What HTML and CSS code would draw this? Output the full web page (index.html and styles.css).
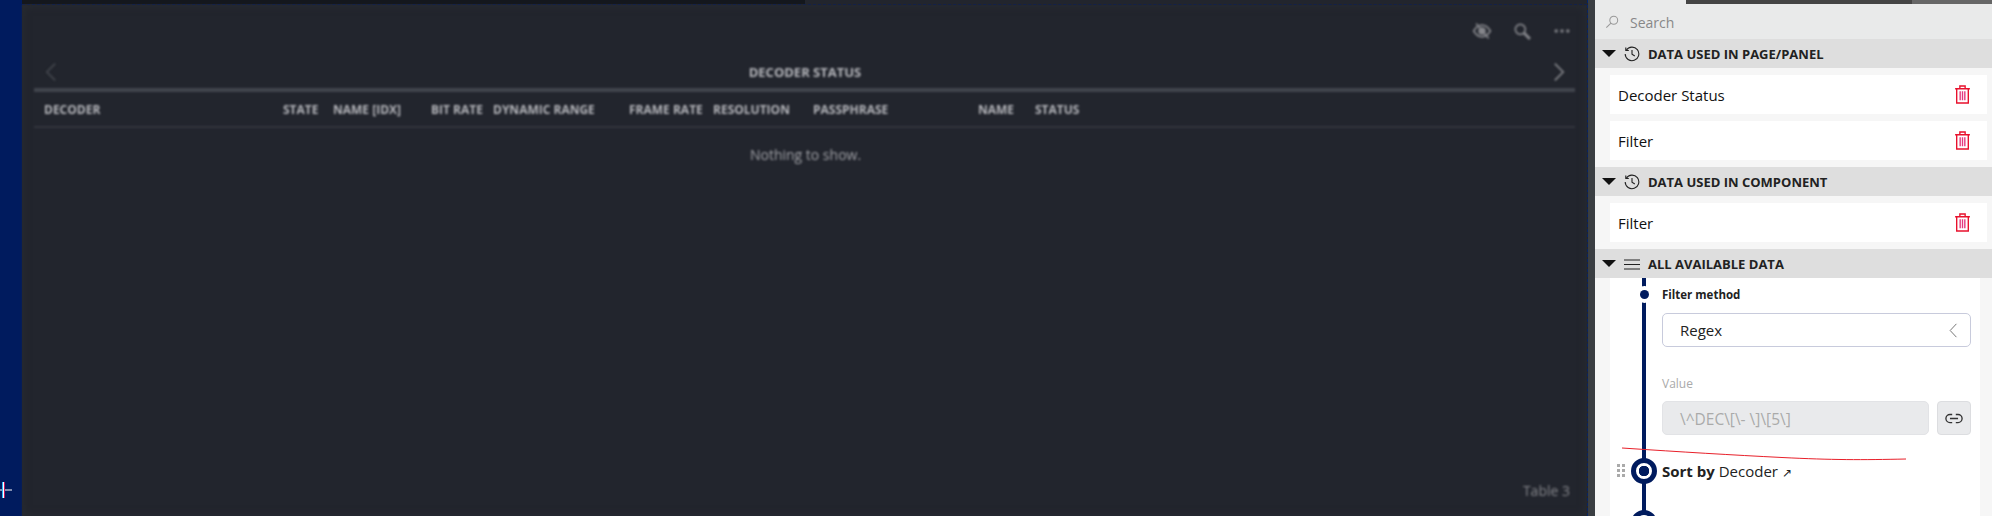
FILE: index.html
```html
<!DOCTYPE html>
<html>
<head>
    <meta charset="utf-8">
    <title>Decoder Status</title>
    <link rel="stylesheet" href="styles.css">
</head>
<body>
    <div class="rail"></div>

    <div class="canvas">
        <div class="canvas-top"><span class="top-dark"></span></div>
        <div class="panel">
            <div class="toolbar">
                <svg class="tool" viewBox="0 0 24 24"><path d="M2 12c3-5 6.500-7 10-7s7 2 10 7c-3 5-6.500 7-10 7s-7-2-10-7z"/><circle cx="12" cy="12" r="4.500" class="solid"/><path d="M5 3l15 18"/></svg>
                <svg class="tool" viewBox="0 0 24 24"><circle cx="10" cy="10" r="6"/><path d="M14.500 14.500l7 7" class="thick"/></svg>
                <svg class="tool" viewBox="0 0 24 24"><circle cx="5" cy="12" r="2" class="solid"/><circle cx="12" cy="12" r="2" class="solid"/><circle cx="19" cy="12" r="2" class="solid"/></svg>
            </div>
            <div class="title-row">
                <svg class="nav nav-off" viewBox="0 0 14 24"><path d="M12 2L2 12l10 10"/></svg>
                <span class="title">DECODER STATUS</span>
                <svg class="nav" viewBox="0 0 14 24"><path d="M2 2l10 10L2 22"/></svg>
            </div>
            <div class="table-head">
                <span>DECODER</span>
                <span>STATE</span>
                <span>NAME [IDX]</span>
                <span>BIT RATE</span>
                <span>DYNAMIC RANGE</span>
                <span>FRAME RATE</span>
                <span>RESOLUTION</span>
                <span>PASSPHRASE</span>
                <span>NAME</span>
                <span>STATUS</span>
            </div>
            <div class="empty">Nothing to show.</div>
            <div class="table-name">Table 3</div>
        </div>
    </div>

    <div class="gutter"></div>

    <div class="sidebar">
        <div class="top-strip">
            <span class="strip-a"></span>
            <span class="strip-b"></span>
            <span class="strip-c"></span>
        </div>
        <div class="search">
            <svg class="search-icon" viewBox="0 0 16 16"><circle cx="10" cy="6" r="4.500"/><path d="M6.800 9.200L1.500 14.500"/></svg>
            <span>Search</span>
        </div>

        <div class="section-head">
            <span class="caret"></span>
            <svg class="head-icon" viewBox="0 0 16 16"><path d="M2.300 4.200A6.800 6.800 0 1 1 1.200 8"/><path d="M1.800 1.500v3h3"/><path d="M8 4v4.300l2.800 1.700"/></svg>
            <span>Data used in page/panel</span>
        </div>
        <div class="card">
            <span>Decoder Status</span>
            <svg class="trash" viewBox="0 0 16 18"><path d="M1 3.500h14M5.500 3.500V1h5v2.500M2.500 3.500V17h11V3.500"/><path d="M5.800 6v8.500M8 6v8.500M10.200 6v8.500" class="trash-bars"/></svg>
        </div>
        <div class="card">
            <span>Filter</span>
            <svg class="trash" viewBox="0 0 16 18"><path d="M1 3.500h14M5.500 3.500V1h5v2.500M2.500 3.500V17h11V3.500"/><path d="M5.800 6v8.500M8 6v8.500M10.200 6v8.500" class="trash-bars"/></svg>
        </div>

        <div class="section-head">
            <span class="caret"></span>
            <svg class="head-icon" viewBox="0 0 16 16"><path d="M2.300 4.200A6.800 6.800 0 1 1 1.200 8"/><path d="M1.800 1.500v3h3"/><path d="M8 4v4.300l2.800 1.700"/></svg>
            <span>Data used in component</span>
        </div>
        <div class="card">
            <span>Filter</span>
            <svg class="trash" viewBox="0 0 16 18"><path d="M1 3.500h14M5.500 3.500V1h5v2.500M2.500 3.500V17h11V3.500"/><path d="M5.800 6v8.500M8 6v8.500M10.200 6v8.500" class="trash-bars"/></svg>
        </div>

        <div class="section-head">
            <span class="caret"></span>
            <svg class="head-icon" viewBox="0 0 16 16"><path d="M0 4h16M0 8.500h16M0 13h16"/></svg>
            <span>All available data</span>
        </div>
        <div class="data">
            <div class="steps">
                <div class="field-label">
                    <span class="small-dot"></span>
                    Filter method
                </div>
                <div class="select">
                    <span>Regex</span>
                    <svg class="select-arrow" viewBox="0 0 10 18"><path d="M8.500 1L1 9l7.500 8"/></svg>
                </div>
                <div class="value-label">Value</div>
                <div class="value-row">
                    <div class="value-input">\^DEC\[\- \]\[5\]</div>
                    <div class="link-btn">
                        <svg viewBox="0 0 20 12"><path d="M8 1.500H5.500a4.500 4.500 0 0 0 0 9H8M12 1.500h2.500a4.500 4.500 0 0 1 0 9H12M5.500 6h9"/></svg>
                    </div>
                </div>
                <div class="sort-row">
                    <span class="grip"><i></i><i></i><i></i><i></i><i></i><i></i></span>
                    <span class="node"></span>
                    <b>Sort by</b> Decoder <span class="arrow">↗</span>
                </div>
                <div class="next-row"><span class="node"></span></div>
            </div>
            <svg class="scribble" width="290" height="16" viewBox="0 0 290 16"><path d="M0 1C60 5 110 8 160 10.500S240 13 284 12"/></svg>
        </div>
    </div>

    <svg class="cursor" width="12" height="16" viewBox="0 0 12 16"><path d="M0 8h12" stroke="#fff"/><path d="M3.500 0v16" stroke="#fff" stroke-width="2"/><path d="M2.500 0v16" stroke="#29b6f6"/><path d="M4.500 0v16" stroke="#c2185b"/></svg>
</body>
</html>
```

FILE: styles.css
```css
* {
    box-sizing: border-box;
}

body {
    font-family: 'Open Sans', 'Noto Sans', sans-serif;
    margin: 0;
    width: 1992px;
    height: 516px;
    display: flex;
    overflow: hidden;
    background-color: #001b5e;
    position: relative;
}

.rail {
    width: 22px;
    background-color: #001b5e;
}

.canvas {
    width: 1566px;
    display: flex;
    flex-direction: column;
    background-color: #22252d;
    border-right: 1px dashed #00236e;
}

.canvas-top {
    height: 5px;
    background-color: #22252d;
    border-bottom: 1px dashed #10204e;
}

.top-dark {
    display: block;
    width: 783px;
    height: 4px;
    background-color: #14171d;
}

.panel {
    flex: 1;
    display: flex;
    flex-direction: column;
    padding: 0 12px 0 12px;
    box-shadow: inset 0 0 10px #2b2e34;
    color: #b4b5ba;
    filter: blur(1px);
}

.toolbar {
    height: 44px;
    display: flex;
    justify-content: flex-end;
    align-items: center;
    gap: 20px;
    padding: 7px 3px 0 0;
}

.tool {
    width: 20px;
    height: 20px;
    fill: none;
    stroke: #85868b;
    stroke-width: 2;
}

.tool .solid {
    fill: #85868b;
    stroke: none;
}

.tool .thick {
    stroke-width: 3.500;
}

.title-row {
    height: 42px;
    display: flex;
    justify-content: space-between;
    align-items: center;
    padding: 6px 10px 0 11px;
    border-bottom: 4px solid #42454d;
    margin-top: 1px;
}

.title {
    font-size: 13px;
    font-weight: 700;
}

.nav {
    width: 12px;
    height: 20px;
    fill: none;
    stroke: #85868b;
    stroke-width: 2;
}

.nav-off {
    stroke: #44474e;
}

.table-head {
    display: grid;
    grid-template-columns: 239px 50px 98px 62px 136px 84px 100px 165px 57px auto;
    align-items: center;
    height: 36px;
    padding-left: 10px;
    border-bottom: 2px solid #33363e;
    font-size: 12px;
    font-weight: 700;
}

.empty {
    text-align: center;
    font-size: 14px;
    margin-top: 17px;
    padding-left: 2px;
    color: #a0a1a6;
}

.table-name {
    margin-top: auto;
    margin-bottom: 16px;
    text-align: right;
    padding-right: 5px;
    font-size: 14px;
    color: #85868b;
}

.gutter {
    width: 7px;
    background-color: #3a3e42;
}

.sidebar {
    width: 397px;
    height: 516px;
    display: flex;
    flex-direction: column;
    background-color: #f6f6f6;
    color: #222;
}

.top-strip {
    height: 4px;
    display: flex;
    flex-shrink: 0;
}

.strip-a {
    width: 91px;
    background-color: #e9eaea;
}

.strip-b {
    width: 226px;
    background-color: #444;
}

.strip-c {
    flex: 1;
    background-color: #666;
}

.search {
    height: 35px;
    flex-shrink: 0;
    display: flex;
    align-items: center;
    gap: 11px;
    padding: 1px 0 0 10px;
    background-color: #e9eaea;
    font-size: 14px;
    color: #888;
}

.search-icon {
    width: 14px;
    height: 14px;
    fill: none;
    stroke: #999;
    stroke-width: 1.200;
}

.section-head {
    height: 29px;
    flex-shrink: 0;
    display: flex;
    align-items: center;
    padding-left: 7px;
    background-color: #dedede;
    font-size: 13px;
    font-weight: 700;
    text-transform: uppercase;
    color: #222;
}

.caret {
    width: 0;
    height: 0;
    border-left: 7px solid transparent;
    border-right: 7px solid transparent;
    border-top: 7px solid #111;
    margin-right: 8px;
}

.head-icon {
    width: 16px;
    height: 16px;
    margin-right: 8px;
    fill: none;
    stroke: #222;
    stroke-width: 1.100;
}

.card {
    height: 39px;
    flex-shrink: 0;
    margin: 7px 5px 0 15px;
    padding: 0 16px 0 8px;
    display: flex;
    justify-content: space-between;
    align-items: center;
    background-color: #fff;
    font-size: 15px;
    color: #111;
}

.card + .section-head {
    margin-top: 7px;
}

.trash {
    width: 17px;
    height: 19px;
    fill: none;
    stroke: #e8112d;
    stroke-width: 1.300;
}

.trash-bars {
    stroke: #e5397f;
    stroke-width: 1.300;
}

.data {
    flex: 1;
    min-height: 0;
    margin: 0 12px 0 15px;
    background-color: #fff;
    position: relative;
    overflow: hidden;
}

.steps {
    margin-left: 32px;
    height: 260px;
    padding: 8px 0 0 16px;
    border-left: 4px solid #001b5e;
}

.field-label {
    position: relative;
    height: 18px;
    line-height: 18px;
    font-size: 11.500px;
    font-weight: 700;
}

.small-dot {
    position: absolute;
    left: -22.500px;
    top: 4px;
    width: 9px;
    height: 9px;
    border-radius: 50%;
    background-color: #001b5e;
    box-shadow: 0 0 0 4px #fff;
}

.select {
    width: 309px;
    height: 34px;
    margin-top: 9px;
    padding: 0 12px 0 17px;
    display: flex;
    justify-content: space-between;
    align-items: center;
    border: 1px solid #c8cbdc;
    border-radius: 5px;
    font-size: 15px;
    color: #222;
}

.select-arrow {
    width: 9px;
    height: 15px;
    fill: none;
    stroke: #777;
    stroke-width: 1.200;
}

.value-label {
    margin-top: 28px;
    height: 18px;
    line-height: 18px;
    font-size: 12px;
    color: #aaa;
}

.value-row {
    margin-top: 8px;
    display: flex;
    gap: 8px;
    width: 309px;
}

.value-input {
    flex: 1;
    height: 34px;
    line-height: 34px;
    padding-left: 17px;
    border-radius: 5px;
    border: 1px solid #e2e3e6;
    background-color: #e9eaec;
    font-size: 15.500px;
    color: #aaa;
}

.link-btn {
    width: 34px;
    height: 34px;
    display: flex;
    justify-content: center;
    align-items: center;
    border-radius: 4px;
    border: 1px solid #dcdde0;
    background-color: #e9eaec;
}

.link-btn svg {
    width: 18px;
    height: 11px;
    fill: none;
    stroke: #333;
    stroke-width: 1.500;
}

.sort-row {
    position: relative;
    margin-top: 23px;
    height: 26px;
    line-height: 26px;
    font-size: 15px;
    color: #222;
}

.arrow {
    font-size: 12px;
}

.node {
    position: absolute;
    left: -31px;
    top: 0;
    width: 26px;
    height: 26px;
    border-radius: 50%;
    border: 5px solid #001b5e;
    background: radial-gradient(circle, #001b5e 0 5px, #fff 5.500px);
}

.grip {
    position: absolute;
    left: -45px;
    top: 6px;
    width: 8px;
    display: grid;
    grid-template-columns: 3px 3px;
    gap: 2px;
}

.grip i {
    width: 3px;
    height: 3px;
    background-color: #aaa;
}

.next-row {
    position: relative;
    margin-top: 26px;
    height: 26px;
}

.scribble {
    position: absolute;
    left: 12px;
    top: 169px;
    fill: none;
    stroke: #e8202a;
    stroke-width: 1;
}

.cursor {
    position: absolute;
    left: 0;
    top: 482px;
}
```
